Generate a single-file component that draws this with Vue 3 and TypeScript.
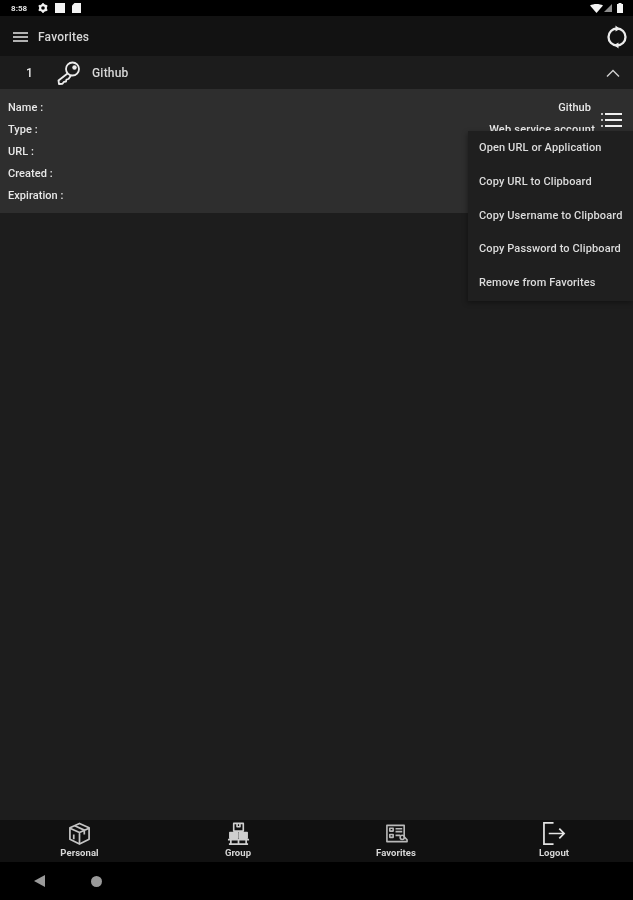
<script setup lang="ts">
const details = [
  { label: 'Name :', value: 'Github' },
  { label: 'Type :', value: 'Web service account' },
  { label: 'URL :', value: '' },
  { label: 'Created :', value: '' },
  { label: 'Expiration :', value: '' }
]

const menu = [
  'Open URL or Application',
  'Copy URL to Clipboard',
  'Copy Username to Clipboard',
  'Copy Password to Clipboard',
  'Remove from Favorites'
]
</script>

<template>
  <div class="screen">
    <div class="status">
      <span class="time">8:58</span>
      <svg class="st-icon" viewBox="0 0 10 10"><circle cx="5" cy="5" r="2.900" fill="none" stroke="#f2f2f2" stroke-width="2.200" /><path d="M5 0v2M5 8v2M0.700 2.500l1.700 1M7.600 6.500l1.700 1M0.700 7.500l1.700-1M7.600 3.500l1.700-1" stroke="#f2f2f2" stroke-width="1.500" /></svg>
      <span class="st-square"></span>
      <svg class="st-card" viewBox="0 0 9 10"><path d="M2.500 0H9v10H0V2.500z" fill="#f2f2f2" /></svg>
      <span class="spacer"></span>
      <svg class="st-wifi" viewBox="0 0 13 9"><path d="M0 1.500C3.500-.5 9.500-.5 13 1.500L6.500 9z" fill="#f4f4f4" /></svg>
      <svg class="st-signal" viewBox="0 0 8 8"><path d="M8 0v8H0z" fill="#8d8d8d" /></svg>
      <svg class="st-batt" viewBox="0 0 6 10"><path d="M1.500 0h3v1H6v9H0V1h1.500z" fill="#f4f4f4" /></svg>
    </div>

    <header class="toolbar">
      <svg class="burger" viewBox="0 0 15 10"><path d="M0 1h15M0 5h15M0 9h15" stroke="#e6e6e6" stroke-width="1.500" /></svg>
      <span class="title">Favorites</span>
      <span class="spacer"></span>
      <svg class="sync" viewBox="0 0 24 26" fill="none" stroke="#ececec" stroke-width="2.300">
        <circle cx="12" cy="13" r="8.500" />
        <path d="M10.500 1.500v6l4.500-2.500z" fill="#ececec" stroke="none" />
        <path d="M13.500 24.500v-6L9 21z" fill="#ececec" stroke="none" />
      </svg>
    </header>

    <main class="content">
      <div class="row">
        <span class="index">1</span>
        <svg class="key" viewBox="0 0 24 24" fill="none" stroke="#ececec" stroke-width="1.800" stroke-linejoin="round">
          <circle cx="15.500" cy="8" r="6.500" />
          <circle cx="17.500" cy="6.500" r="2.200" fill="#ececec" stroke="none" />
          <path d="M10.500 12.500 1.500 19.500 2 23 5.500 22.800 7 20.800 9 20.500 9.500 18.500 11.500 18 14 14.500" />
        </svg>
        <span class="row-name">Github</span>
        <span class="spacer"></span>
        <svg class="chevron" viewBox="0 0 14 8"><path d="M1 7.500 7 1.500l6 6" fill="none" stroke="#d0d0d0" stroke-width="1.400" /></svg>
      </div>

      <section class="details">
        <div v-for="item in details" :key="item.label" class="detail">
          <span>{{ item.label }}</span>
          <span class="value">{{ item.value }}</span>
        </div>
        <svg class="list-icon" viewBox="0 0 21 16">
          <path d="M4 2h17M4 8h17M4 14h17" stroke="#f0f0f0" stroke-width="2.200" />
          <path d="M0 2h2M0 8h2M0 14h2" stroke="#f0f0f0" stroke-width="1.600" />
        </svg>
      </section>

      <ul class="menu">
        <li v-for="entry in menu" :key="entry">{{ entry }}</li>
      </ul>
    </main>

    <nav class="tabs">
      <div class="tab">
        <svg viewBox="0 0 24 24" fill="none" stroke="#c4c4c4" stroke-width="1.800" stroke-linejoin="round">
          <path d="M12 1.500 22 6v12l-10 5-10-5V6z" />
          <path d="M2 6.500l10 4.500 10-4.500M12 11v12M7 4l10 4.500v4.500M6 13v5" />
        </svg>
        <span>Personal</span>
      </div>
      <div class="tab">
        <svg viewBox="0 0 24 24" fill="none" stroke="#cfcfcf" stroke-width="1.700" stroke-linejoin="round">
          <path d="M7 1.500h10v8H7zM10.500 1.500v3.500h3V1.500" />
          <path d="M3 11h8v6H3zM13 11h8v6h-8z" fill="#cfcfcf" />
          <path d="M1 18.500h22M4 18.500v4M12 18.500v4M20 18.500v4M2 23h20" stroke-width="1.800" />
        </svg>
        <span>Group</span>
      </div>
      <div class="tab">
        <svg viewBox="0 0 24 24" fill="none" stroke="#b8b8b8" stroke-width="1.700" stroke-linejoin="round">
          <path d="M2 3.500h18v12l3 3v2H2z" />
          <path d="M5 6.500h3.500v3H5zM11 7h7M11 10h7M5 13h3.500v3H5zM11 14h5" />
          <circle cx="18" cy="16" r="2.200" />
        </svg>
        <span>Favorites</span>
      </div>
      <div class="tab">
        <svg viewBox="0 0 24 24" fill="none" stroke="#e4e4e4" stroke-width="1.800">
          <path d="M11 1H1v22h10" />
          <path d="M6 12h16M17 7l5 5-5 5" />
        </svg>
        <span>Logout</span>
      </div>
    </nav>

    <div class="sysnav">
      <svg class="back" viewBox="0 0 11 12"><path d="M11 0v12L0 6z" fill="#9a9a9a" /></svg>
      <span class="home"></span>
    </div>
  </div>
</template>

<style scoped>
.screen {
  width: 633px;
  height: 900px;
  display: flex;
  flex-direction: column;
  overflow: hidden;
  background: #1d1d1d;
  color: #e8e8e8;
  font-family: Roboto, "Liberation Sans", sans-serif;
  font-size: 11px;
  font-weight: 500;
  letter-spacing: 0.06px;
  filter: blur(0.35px);
}
.spacer {
  flex: 1;
}
.status {
  height: 16px;
  display: flex;
  align-items: center;
  padding: 0 11px 0 11px;
  background: #000;
  flex: none;
}
.time {
  font-size: 8px;
  font-weight: 700;
  width: 27px;
  color: #e4e4e4;
}
.st-icon {
  width: 10px;
  height: 10px;
  margin-right: 7px;
}
.st-square {
  width: 10px;
  height: 10px;
  background: #f2f2f2;
  margin-right: 7px;
}
.st-card {
  width: 9px;
  height: 10px;
}
.st-wifi {
  width: 13px;
  height: 9px;
}
.st-signal {
  width: 8px;
  height: 8px;
  margin: 0 5px 0 1px;
}
.st-batt {
  width: 6px;
  height: 10px;
  margin-right: -1px;
}
.toolbar {
  height: 40px;
  flex: none;
  box-sizing: border-box;
  display: flex;
  align-items: center;
  padding: 2px 4px 0 13px;
  background: #121212;
}
.burger {
  width: 15px;
  height: 10px;
  margin-right: 10px;
}
.title {
  font-size: 12px;
  letter-spacing: 0.2px;
  color: #d8d8d8;
}
.sync {
  width: 24px;
  height: 26px;
}
.content {
  position: relative;
  flex: 1;
}
.row {
  height: 33px;
  display: flex;
  align-items: center;
  padding: 0 13px 0 26px;
  background: #1c1c1c;
}
.index {
  width: 31px;
  font-size: 12px;
}
.key {
  width: 24px;
  height: 24px;
  margin-right: 11px;
}
.row-name {
  font-size: 12px;
  letter-spacing: 0.2px;
  color: #d8d8d8;
}
.chevron {
  width: 14px;
  height: 8px;
}
.details {
  position: relative;
  height: 124px;
  box-sizing: border-box;
  padding: 7px 42px 0 8px;
  background: #2e2e2e;
}
.detail {
  height: 22px;
  display: flex;
  justify-content: space-between;
  align-items: center;
}
.detail:nth-child(2) .value {
  margin-right: -4px;
  letter-spacing: 0.2px;
}
.value {
  text-align: right;
}
.list-icon {
  position: absolute;
  top: 23px;
  right: 11px;
  width: 21px;
  height: 16px;
}
.menu {
  position: absolute;
  top: 75px;
  right: 0;
  width: 165px;
  height: 170px;
  box-sizing: border-box;
  margin: 0;
  padding: 0;
  list-style: none;
  background: #1f1f1f;
  box-shadow: -1px 2px 5px rgba(0, 0, 0, 0.35);
}
.menu li {
  height: 33.800px;
  line-height: 33.800px;
  padding-left: 11px;
  white-space: nowrap;
  letter-spacing: 0.12px;
  color: #dcdcdc;
}
.tabs {
  height: 42px;
  flex: none;
  display: grid;
  grid-template-columns: 159px 158px 158px 158px;
  background: #111;
}
.tab {
  display: flex;
  flex-direction: column;
  align-items: center;
  padding-top: 2px;
  font-size: 9.500px;
  font-weight: 700;
  line-height: 11px;
  color: #d6d6d6;
}
.tab svg {
  width: 23px;
  height: 23px;
  margin-bottom: 2px;
}
.sysnav {
  height: 38px;
  flex: none;
  display: flex;
  align-items: center;
  padding-left: 34px;
  background: #000;
}
.back {
  width: 11px;
  height: 12px;
  margin-right: 46px;
}
.home {
  width: 11px;
  height: 11px;
  border-radius: 50%;
  background: #9a9a9a;
}
</style>
